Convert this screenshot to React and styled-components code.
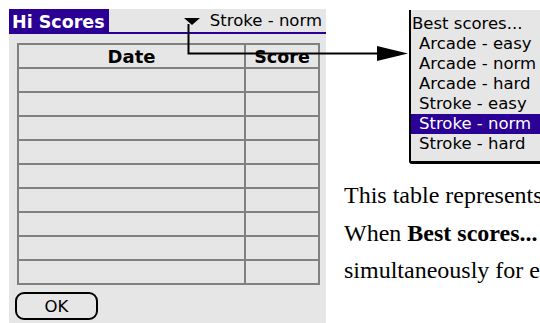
import React from "react";
import styled, { createGlobalStyle } from "styled-components";

const PURPLE = "#2b0095";
const SCREEN = "#e6e6e6";
const RULE = "#808080";
const PALM_FONT = `"DejaVu Sans", "Liberation Sans", sans-serif`;

const GlobalStyle = createGlobalStyle`
  html, body {
    margin: 0;
    padding: 0;
    background: #fff;
    overflow: hidden;
  }
`;

// STYLED-COMPONENT
const Page = styled.div`
  position: relative;
  display: flex;
  align-items: flex-start;
  width: 540px;
  height: 323px;
  overflow: hidden;
`;
const Screen = styled.div`
  flex-shrink: 0;
  display: flex;
  flex-direction: column;
  align-items: flex-start;
  width: 317px;
  height: 314px;
  margin: 9px 0 0 9px;
  background: ${SCREEN};
  font-family: ${PALM_FONT};
  color: #000;
`;
const TitleBar = styled.div`
  display: flex;
  align-items: stretch;
  width: 100%;
  height: 23px;
  border-bottom: 2px solid ${PURPLE};
`;
const Title = styled.div`
  width: 100px;
  box-sizing: border-box;
  padding-left: 3px;
  background: ${PURPLE};
  color: #fff;
  font-weight: bold;
  font-size: 17.5px;
  line-height: 26px;
  white-space: nowrap;
`;
const Trigger = styled.div`
  margin-left: auto;
  display: flex;
  align-items: flex-start;
  gap: 10px;
  padding-right: 4px;
  font-size: 16.5px;
  line-height: 24px;
  white-space: nowrap;
`;
const Caret = styled.svg`
  margin-top: 9px;
  display: block;
`;
const Grid = styled.div`
  margin: 9px 0 0 8px;
  width: 299px;
  border: 2px solid ${RULE};
`;
const Row = styled.div`
  display: grid;
  grid-template-columns: 227px 72px;
  height: 22px;
  border-bottom: ${(p) => (p.$last ? "none" : `2px solid ${RULE}`)};
`;
const Cell = styled.div`
  border-right: ${(p) => (p.$divider ? `2px solid ${RULE}` : "none")};
  text-align: center;
  font-weight: bold;
  font-size: ${(p) => p.$size || "17.5px"};
  line-height: 24px;
  overflow: hidden;
`;
const OkButton = styled.button`
  margin: 7px 0 0 6px;
  width: 83px;
  height: 28px;
  box-sizing: border-box;
  border: 2px solid #000;
  border-radius: 9px;
  background: transparent;
  font-family: ${PALM_FONT};
  font-size: 16.5px;
  color: #000;
  padding: 0;
`;
const Side = styled.div`
  flex-shrink: 0;
  display: flex;
  flex-direction: column;
  align-items: flex-start;
  margin-left: 18px;
  width: 420px;
`;
const Menu = styled.div`
  margin: 10px 0 0 65px;
  width: 200px;
  padding: 4px 0 7px 0;
  background: ${SCREEN};
  border-left: 2px solid #000;
  border-bottom: 3px solid #000;
  border-bottom-left-radius: 3px;
  font-family: ${PALM_FONT};
  font-size: 16.5px;
`;
const MenuItem = styled.div`
  height: 20px;
  line-height: 20px;
  padding-left: ${(p) => (p.$heading ? "1px" : "8px")};
  background: ${(p) => (p.$active ? PURPLE : "transparent")};
  color: ${(p) => (p.$active ? "#fff" : "#000")};
  white-space: nowrap;
`;
const Doc = styled.div`
  margin-top: 13px;
  font-family: "Liberation Serif", "Times New Roman", serif;
  font-size: 24px;
  line-height: 37.5px;
  color: #000;
  white-space: nowrap;
`;
const Connector = styled.svg`
  position: absolute;
  left: 0;
  top: 0;
  pointer-events: none;
`;

const MODES = [
  "Arcade - easy",
  "Arcade - norm",
  "Arcade - hard",
  "Stroke - easy",
  "Stroke - norm",
  "Stroke - hard",
];

// COMPONENT
const App = () => {
  const selected = "Stroke - norm";
  const emptyRows = Array.from({ length: 9 });

  return (
    <>
      <GlobalStyle />
      <Page>
        <Screen>
          <TitleBar>
            <Title>Hi Scores</Title>
            <Trigger>
              <Caret width="16" height="7" viewBox="0 0 16 7">
                <polygon points="0,0 16,0 8,7" fill="#000" />
              </Caret>
              <span>{selected}</span>
            </Trigger>
          </TitleBar>
          <Grid>
            <Row>
              <Cell $divider $size="18px">Date</Cell>
              <Cell>Score</Cell>
            </Row>
            {emptyRows.map((_, i) => (
              <Row key={i} $last={i === emptyRows.length - 1}>
                <Cell $divider />
                <Cell />
              </Row>
            ))}
          </Grid>
          <OkButton>OK</OkButton>
        </Screen>
        <Side>
          <Menu>
            <MenuItem $heading>Best scores...</MenuItem>
            {MODES.map((m) => (
              <MenuItem key={m} $active={m === selected}>
                {m}
              </MenuItem>
            ))}
          </Menu>
          <Doc>
            <div>This table represents the best scores reached in each game mode.</div>
            <div>
              When <b>Best scores...</b> is selected, the best results are shown
            </div>
            <div>simultaneously for each of the six game modes.</div>
          </Doc>
        </Side>
        <Connector width="540" height="323" viewBox="0 0 540 323">
          <path d="M188.5 24 V53.5 H380" fill="none" stroke="#000" strokeWidth="2" />
          <polygon points="377,46 408,53.5 377,61" fill="#000" />
        </Connector>
      </Page>
    </>
  );
};

export default App;
